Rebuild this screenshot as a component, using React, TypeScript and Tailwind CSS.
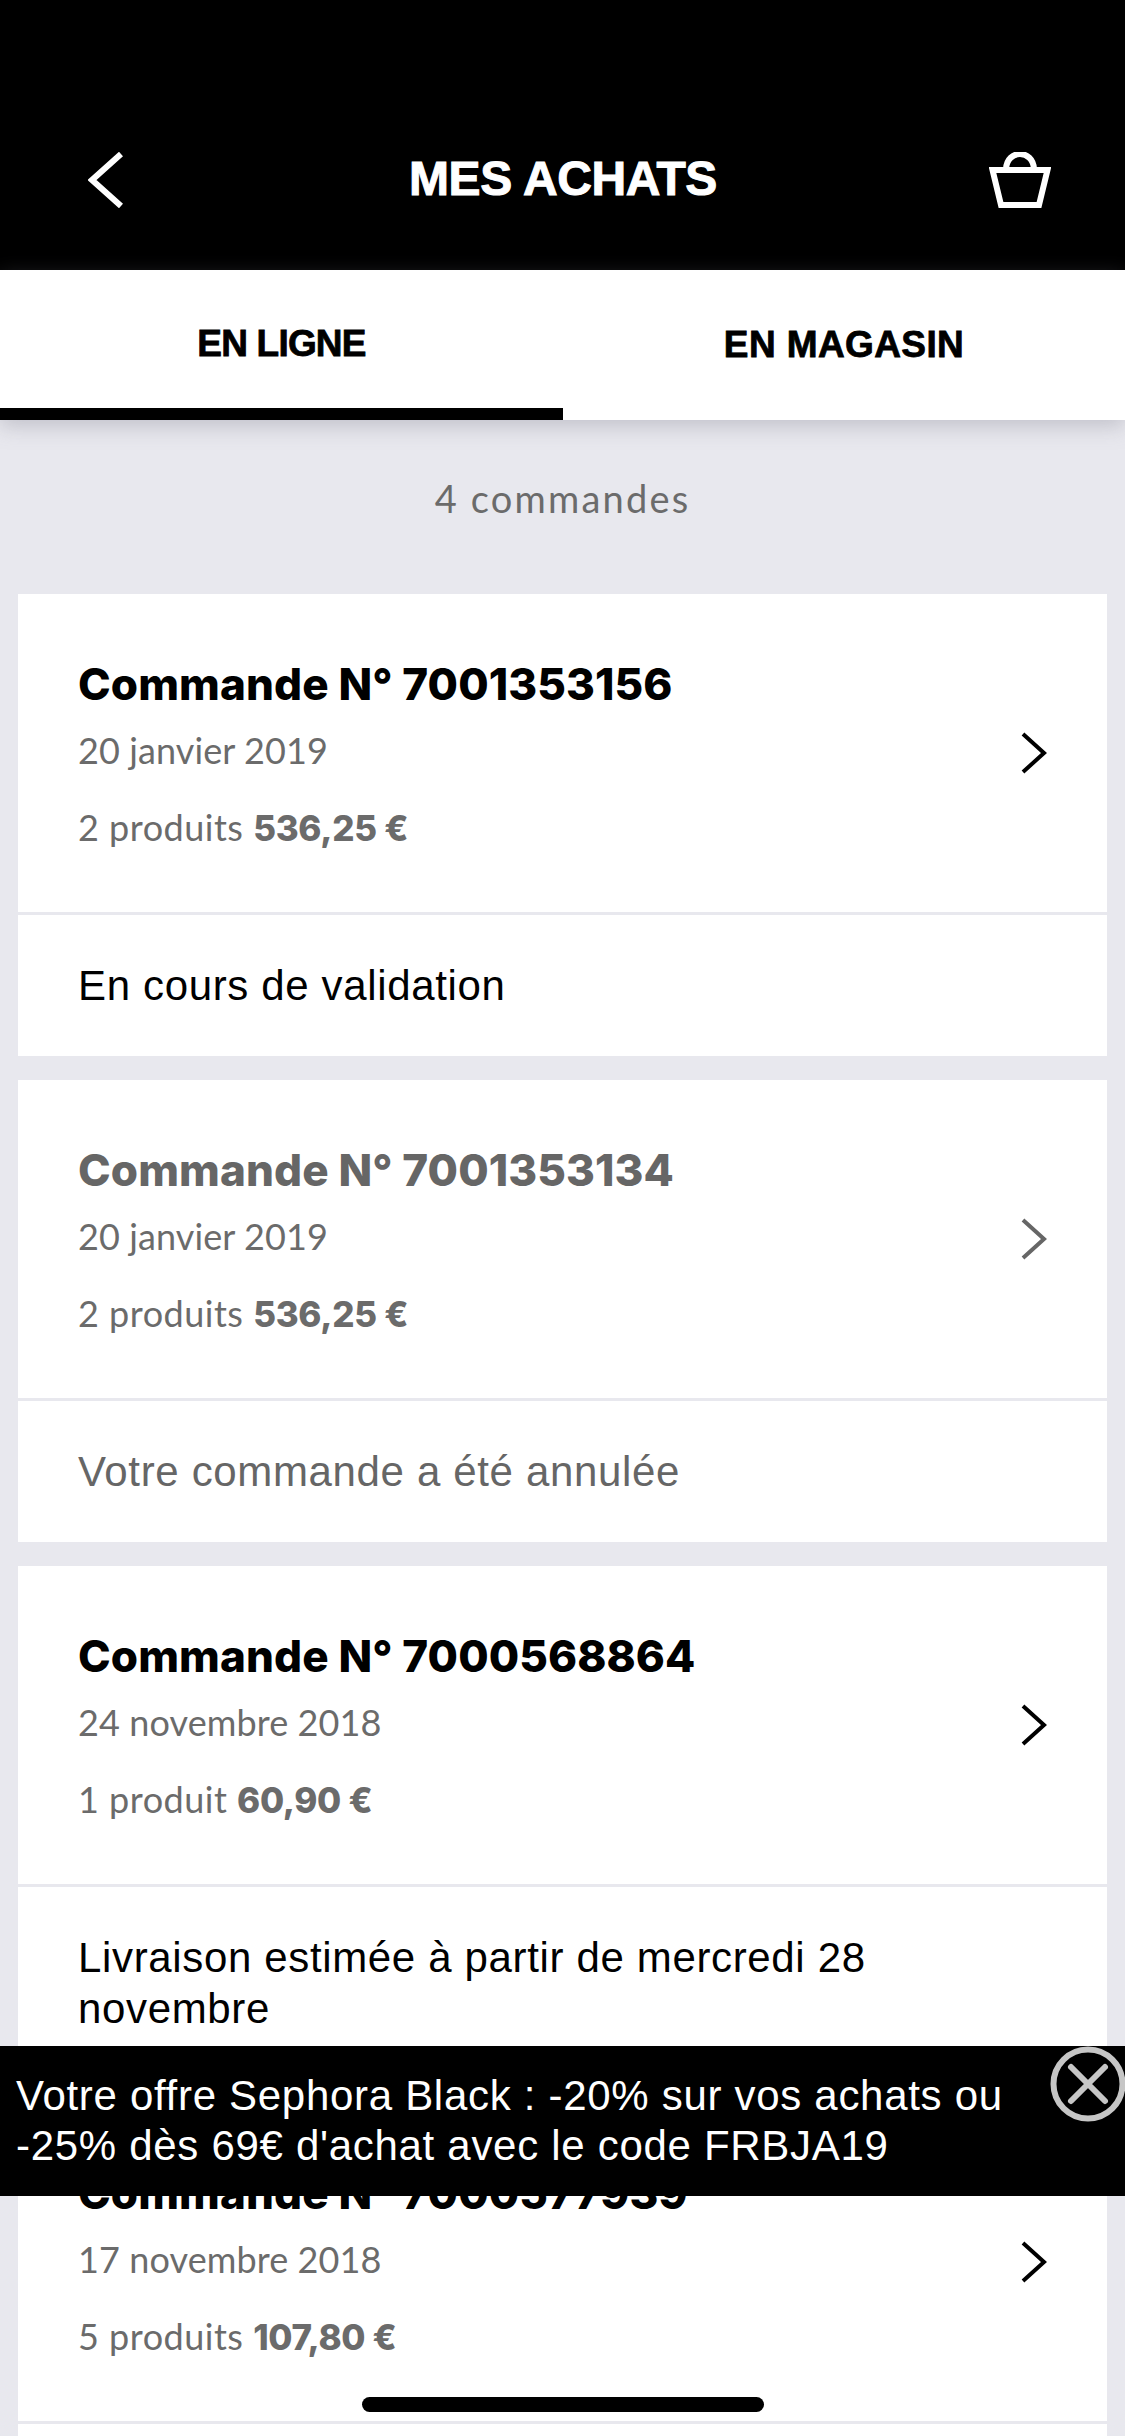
const orders = [
  {
    id: "7001353156",
    date: "20 janvier 2019",
    count: "2 produits",
    total: "536,25 €",
    status: ["En cours de validation"],
    muted: false,
  },
  {
    id: "7001353134",
    date: "20 janvier 2019",
    count: "2 produits",
    total: "536,25 €",
    status: ["Votre commande a été annulée"],
    muted: true,
  },
  {
    id: "7000568864",
    date: "24 novembre 2018",
    count: "1 produit",
    total: "60,90 €",
    status: ["Livraison estimée à partir de mercredi 28", "novembre"],
    muted: false,
  },
  {
    id: "7000577939",
    date: "17 novembre 2018",
    count: "5 produits",
    total: "107,80 €",
    status: [],
    muted: false,
  },
];

type Order = (typeof orders)[number];

function Chevron({ muted }: { muted: boolean }) {
  return (
    <svg width="26" height="42" viewBox="0 0 26 42" fill="none" className="shrink-0">
      <path d="M2 2 L23 21 L2 40" stroke={muted ? "#666666" : "#000000"} strokeWidth="4" />
    </svg>
  );
}

function OrderCard({ order }: { order: Order }) {
  return (
    <div className="bg-white">
      <div className="h-[318px] flex items-center justify-between pl-[60px] pr-[60px]">
        <div className="self-start pt-[60px]">
          <p className={`font-['Inter',sans-serif] text-[44px] leading-[60px] font-extrabold tracking-[0.1px] ${order.muted ? "text-[#666666]" : "text-black"}`}>
            Commande N° {order.id}
          </p>
          <p className="mt-[11px] text-[36px] leading-[50px] tracking-[0.1px] text-[#6b6b6b]">{order.date}</p>
          <p className="mt-[27px] text-[36px] leading-[50px] tracking-[0.5px] text-[#6b6b6b]">
            {order.count}{" "}
            <span className="font-['Inter',sans-serif] text-[35px] font-extrabold tracking-[-0.3px]">{order.total}</span>
          </p>
        </div>
        <Chevron muted={order.muted} />
      </div>
      <div className={`border-t-[3px] border-[#e8e8ee] px-[60px] py-[45px] font-['Liberation_Sans',sans-serif] text-[42px] leading-[51px] tracking-[0.65px] ${order.muted ? "text-[#666666]" : "text-black"}`}>
        {order.status.map((line) => (
          <p key={line}>{line}</p>
        ))}
      </div>
    </div>
  );
}

export default function App() {
  return (
    <div className="relative h-[2436px] w-[1125px] overflow-hidden bg-[#e8e8ee] font-['Lato','Liberation_Sans',sans-serif]">
      {/* Header */}
      <div className="grid grid-cols-[1fr_auto_1fr] items-center h-[270px] pt-[120px] pb-[30px] pl-[88px] pr-[73px] bg-black text-white">
        <svg width="36" height="56" viewBox="0 0 36 56" fill="none">
          <path d="M33 2 L4 28 L33 54" stroke="#ffffff" strokeWidth="6" />
        </svg>
        <h1 className="font-['Liberation_Sans',sans-serif] text-[48px] leading-none font-bold tracking-[-0.4px] translate-x-[-7px] -translate-y-[1px] [-webkit-text-stroke:1px_white]">
          MES ACHATS
        </h1>
        <svg width="62" height="56" viewBox="0 0 62 56" fill="none" className="justify-self-end -translate-x-[1px]">
          <path d="M17 17 C18 -3 44 -3 45 17" stroke="#ffffff" strokeWidth="6" />
          <path d="M3.5 18 H58.5 L50 53 H12 Z" stroke="#ffffff" strokeWidth="6" />
        </svg>
      </div>

      {/* Tabs */}
      <div className="relative z-10 flex h-[150px] bg-white font-['Liberation_Sans',sans-serif] text-[37px] font-bold text-black shadow-[0_6px_20px_rgba(120,120,135,0.35)] [-webkit-text-stroke:0.8px_black]">
        <div className="w-[563px] flex items-center justify-center pt-[10px] border-b-[12px] border-black tracking-[-0.8px]">
          EN LIGNE
        </div>
        <div className="flex-1 flex items-center justify-center tracking-[0.4px]">EN MAGASIN</div>
      </div>

      <p className="h-[174px] pt-[53px] text-center text-[38px] leading-[50px] tracking-[2.2px] text-[#6b6b6b]">4 commandes</p>

      <div className="flex flex-col gap-[24px] px-[18px]">
        {orders.map((order) => (
          <OrderCard key={order.id} order={order} />
        ))}
      </div>

      {/* Offer banner */}
      <div className="absolute left-0 top-[2046px] h-[150px] w-full bg-black pl-[16px] pt-[25px] font-['Liberation_Sans',sans-serif] text-[42px] leading-[50px] tracking-[0.7px] text-white">
        <p>Votre offre Sephora Black : -20% sur vos achats ou</p>
        <p>-25% dès 69€ d'achat avec le code FRBJA19</p>
        <svg width="76" height="76" viewBox="0 0 76 76" fill="none" className="absolute left-[1050px] top-0">
          <circle cx="38" cy="38" r="34.5" stroke="#c6c6c6" strokeWidth="6" />
          <path d="M21 21 L55 55 M55 21 L21 55" stroke="#c6c6c6" strokeWidth="6" strokeLinecap="round" />
        </svg>
      </div>

      {/* Home indicator */}
      <div className="absolute left-[362px] top-[2397px] h-[15px] w-[402px] rounded-full bg-black" />
    </div>
  );
}
